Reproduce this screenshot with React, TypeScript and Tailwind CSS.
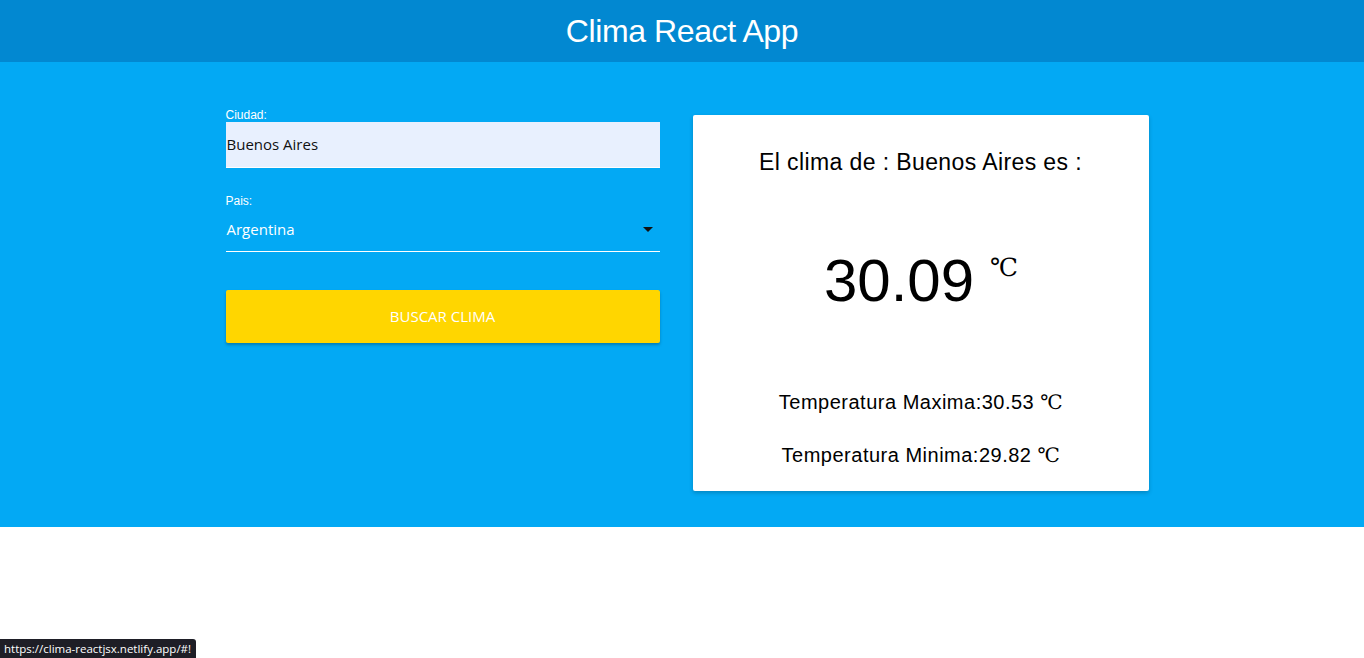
import React from "react";

const serif = "font-['DejaVu_Serif','Liberation_Serif','Times_New_Roman',serif]";

export default function App() {
  return (
    <div className="relative min-h-[658px] w-full bg-white font-['Liberation_Sans',Arial,sans-serif]">
      <header className="flex h-[62px] items-center justify-center bg-[#0288d1]">
        <h1 className="text-[32px] leading-none tracking-[-0.4px] text-white -mt-[1px]">Clima React App</h1>
      </header>
      <main className="flex h-[465px] items-start justify-center gap-[33px] bg-[#03a9f4] pt-[46px] pl-[10px]">
        <div className="w-[434px] flex flex-col">
          <label className="block text-[12px] leading-[14px] text-white">Ciudad:</label>
          <div className="h-[46px] border-b border-white bg-[#e8f0fe] flex items-center">
            <span className="text-[15px] text-[#111] pl-[1px] font-['Open_Sans','Noto_Sans',sans-serif]">Buenos Aires</span>
          </div>
          <label className="mt-[26px] block text-[12px] leading-[14px] text-white">Pais:</label>
          <div className="mt-[8px] flex h-[36px] items-center justify-between border-b border-white pb-[8px]">
            <span className="text-[15px] text-white pl-[1px] font-['Open_Sans','Noto_Sans',sans-serif]">Argentina</span>
            <svg width="10" height="5" viewBox="0 0 10 5" className="mr-[7px]">
              <path d="M0 0 L10 0 L5 5 Z" fill="#111" />
            </svg>
          </div>
          <button className="mt-[38px] h-[53px] w-full rounded-[2px] bg-[#ffd600] text-[15px] text-white shadow-[0_2px_3px_rgba(0,0,0,0.25)] font-['Open_Sans','Noto_Sans',sans-serif]">
            BUSCAR CLIMA
          </button>
        </div>
        <div className="mt-[7px] w-[456px] h-[376px] bg-white rounded-[2px] shadow-[0_2px_4px_rgba(0,0,0,0.2)] flex flex-col items-center text-black">
          <p className="mt-[34px] text-[23px] leading-[26px] tracking-[0.4px]">El clima de : Buenos Aires es :</p>
          <div className="mt-[71px] flex items-start">
            <span className="text-[60px] leading-[70px]">30.09</span>
            <span className={`ml-[16px] mt-[8px] text-[25px] leading-[28px] tracking-[-1px] ${serif}`}>℃</span>
          </div>
          <p className="mt-[74px] text-[20px] leading-[24px] tracking-[0.5px]">
            Temperatura Maxima:30.53 <span className={`tracking-[-0.5px] ${serif}`}>℃</span>
          </p>
          <p className="mt-[29px] text-[20px] leading-[24px] tracking-[0.5px]">
            Temperatura Minima:29.82 <span className={`tracking-[-0.5px] ${serif}`}>℃</span>
          </p>
        </div>
      </main>
      <div className="absolute bottom-0 left-0 h-[19px] rounded-tr-[3px] bg-[#1e1e26] pl-[4px] pr-[5px] text-[11.5px] leading-[19px] text-white font-['Open_Sans','Noto_Sans',sans-serif]">
        https://clima-reactjsx.netlify.app/#!
      </div>
    </div>
  );
}
